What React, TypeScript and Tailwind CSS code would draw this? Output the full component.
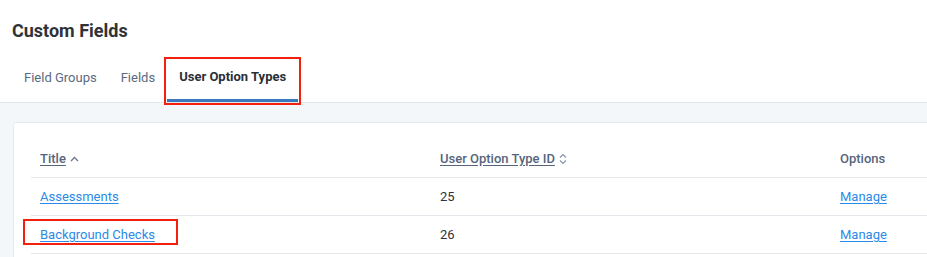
import React from "react";

const ChevUp = () => (
  <svg width="9" height="6" viewBox="0 0 9 6" className="ml-[4px] inline-block">
    <path d="M1 5 L4.5 1.5 L8 5" fill="none" stroke="#6b7689" strokeWidth="1.3" />
  </svg>
);

const ChevUpDown = () => (
  <svg width="8" height="12" viewBox="0 0 8 12" className="ml-[4px] inline-block">
    <path d="M1 4.5 L4 1.5 L7 4.5" fill="none" stroke="#8a94a5" strokeWidth="1.2" />
    <path d="M1 7.5 L4 10.5 L7 7.5" fill="none" stroke="#8a94a5" strokeWidth="1.2" />
  </svg>
);

export default function App() {
  const font = { fontFamily: "Roboto, 'Liberation Sans', sans-serif" };
  return (
    <div className="w-[927px] h-[257px] overflow-hidden bg-[#f4f7fa]" style={font}>
      <div className="bg-white border-b border-[#e3e7ec] h-[103px] flex flex-col">
        <div className="pl-[12px] pt-[20px] text-[18px] font-bold text-[#2f3338] leading-[22px]">
          Custom Fields
        </div>
        <div className="flex pl-[12px] mt-[18px] h-[43px]">
          <div className="px-[12px] flex items-center pb-[6px] text-[13px] text-[#5b6a82]">Field Groups</div>
          <div className="px-[12px] flex items-center pb-[6px] text-[13px] text-[#5b6a82]">Fields</div>
          <div className="relative px-[12px] flex items-center pb-[6px] text-[13px] font-bold text-[#2b2f36] border-b-[3px] border-[#3a78be]">
            User Option Types
            <div className="absolute left-[-3px] right-[-3px] top-[-3px] bottom-[-6px] border-2 border-[#f2200c]" />
          </div>
        </div>
      </div>
      <div className="pl-[13px] pt-[19px]">
        <div className="bg-white border border-[#e6eaef] rounded-[3px] w-[960px] h-[200px] pl-[17px] pt-[17px]">
          <div className="flex h-[38px] items-center border-b border-[#e3e7ec] text-[13px] font-medium text-[#56657d]">
            <div className="w-[400px] pl-[9px] flex items-center">
              <span className="underline underline-offset-2">Title</span>
              <ChevUp />
            </div>
            <div className="w-[400px] pl-[9px] flex items-center">
              <span className="underline underline-offset-2">User Option Type ID</span>
              <ChevUpDown />
            </div>
            <div className="pl-[9px]">Options</div>
          </div>
          <div className="flex h-[38px] items-center border-b border-[#e3e7ec] text-[13px]">
            <div className="w-[400px] pl-[9px]">
              <span className="underline underline-offset-2 text-[#2b8ae8]">Assessments</span>
            </div>
            <div className="w-[400px] pl-[9px] text-[#2f3338]">25</div>
            <div className="pl-[9px]">
              <span className="underline underline-offset-2 text-[#2b8ae8]">Manage</span>
            </div>
          </div>
          <div className="flex h-[38px] items-center border-b border-[#e3e7ec] text-[13px]">
            <div className="relative w-[400px] pl-[9px] self-stretch flex items-center">
              <span className="underline underline-offset-2 text-[#2b8ae8]">Background Checks</span>
              <div className="absolute left-[-8px] top-[3px] w-[155px] h-[26px] border-2 border-[#f2200c]" />
            </div>
            <div className="w-[400px] pl-[9px] text-[#2f3338]">26</div>
            <div className="pl-[9px]">
              <span className="underline underline-offset-2 text-[#2b8ae8]">Manage</span>
            </div>
          </div>
        </div>
      </div>
    </div>
  );
}
